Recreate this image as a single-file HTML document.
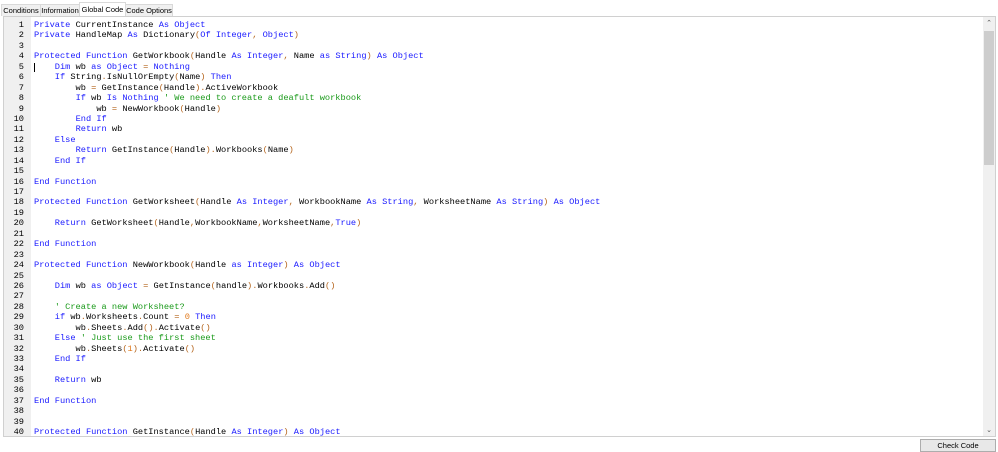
<!DOCTYPE html>
<html><head><style>
body{margin:0;width:998px;height:451px;background:#fff;position:relative;overflow:hidden;font-family:"Liberation Sans",sans-serif}
.tabs{position:absolute;top:2px;left:0;height:14px;font-size:7.5px}
.tab{position:absolute;top:2px;height:11px;line-height:11px;background:#f0f0f0;border:1px solid #d9d9d9;border-bottom:none;text-align:center;color:#000}
.tab.sel{top:0;height:14px;line-height:13px;background:#fff}
.ed{position:absolute;left:3px;top:16px;width:991px;height:419px;border:1px solid #d0d0d0;background:#fff;overflow:hidden}
.gut{position:absolute;left:0;top:0;width:27px;height:100%;background:#f0f0f0}
.code{position:absolute;left:0;top:3px;font-family:"Liberation Mono",monospace;font-size:8.67px;line-height:10.44px;white-space:pre;color:#000}
.ln{display:inline-block;width:20px;text-align:right;margin-right:10px;color:#000}
.k{color:#1a1aff}.p{color:#b5651d}.c{color:#1a9a1a}.n{color:#e0781a}
.sb{position:absolute;right:0;top:0;width:12px;height:100%;background:#f0f0f0}
.th{position:absolute;left:1px;width:10px;top:14px;height:134px;background:#cdcdcd}
.ar{position:absolute;left:0;width:12px;text-align:center;font-size:7px;color:#555}
.btn{position:absolute;left:920px;top:439px;width:74px;height:11px;border:1px solid #adadad;background:#e8e8e8;font-size:7.5px;text-align:center;line-height:11px}
</style></head><body>
<div class="tabs">
<div class="tab" style="left:1px;width:38px">Conditions</div>
<div class="tab" style="left:40px;width:38px">Information</div>
<div class="tab sel" style="left:79px;width:45px">Global Code</div>
<div class="tab" style="left:125px;width:46px">Code Options</div>
</div>
<div class="ed">
<div class="gut"></div>
<div class="code"><span class="ln">1</span><span class="k">Private</span> CurrentInstance <span class="k">As Object</span>
<span class="ln">2</span><span class="k">Private</span> HandleMap <span class="k">As</span> Dictionary<span class="p">(</span><span class="k">Of Integer</span><span class="p">,</span> <span class="k">Object</span><span class="p">)</span>
<span class="ln">3</span>
<span class="ln">4</span><span class="k">Protected Function</span> GetWorkbook<span class="p">(</span>Handle <span class="k">As Integer</span><span class="p">,</span> Name <span class="k">as String</span><span class="p">)</span> <span class="k">As Object</span>
<span class="ln">5</span>    <span class="k">Dim</span> wb <span class="k">as Object</span> <span class="p">=</span> <span class="k">Nothing</span>
<span class="ln">6</span>    <span class="k">If</span> String<span class="p">.</span>IsNullOrEmpty<span class="p">(</span>Name<span class="p">)</span> <span class="k">Then</span>
<span class="ln">7</span>        wb <span class="p">=</span> GetInstance<span class="p">(</span>Handle<span class="p">).</span>ActiveWorkbook
<span class="ln">8</span>        <span class="k">If</span> wb <span class="k">Is Nothing</span> <span class="c">' We need to create a deafult workbook</span>
<span class="ln">9</span>            wb <span class="p">=</span> NewWorkbook<span class="p">(</span>Handle<span class="p">)</span>
<span class="ln">10</span>        <span class="k">End If</span>
<span class="ln">11</span>        <span class="k">Return</span> wb
<span class="ln">12</span>    <span class="k">Else</span>
<span class="ln">13</span>        <span class="k">Return</span> GetInstance<span class="p">(</span>Handle<span class="p">).</span>Workbooks<span class="p">(</span>Name<span class="p">)</span>
<span class="ln">14</span>    <span class="k">End If</span>
<span class="ln">15</span>
<span class="ln">16</span><span class="k">End Function</span>
<span class="ln">17</span>
<span class="ln">18</span><span class="k">Protected Function</span> GetWorksheet<span class="p">(</span>Handle <span class="k">As Integer</span><span class="p">,</span> WorkbookName <span class="k">As String</span><span class="p">,</span> WorksheetName <span class="k">As String</span><span class="p">)</span> <span class="k">As Object</span>
<span class="ln">19</span>
<span class="ln">20</span>    <span class="k">Return</span> GetWorksheet<span class="p">(</span>Handle<span class="p">,</span>WorkbookName<span class="p">,</span>WorksheetName<span class="p">,</span><span class="k">True</span><span class="p">)</span>
<span class="ln">21</span>
<span class="ln">22</span><span class="k">End Function</span>
<span class="ln">23</span>
<span class="ln">24</span><span class="k">Protected Function</span> NewWorkbook<span class="p">(</span>Handle <span class="k">as Integer</span><span class="p">)</span> <span class="k">As Object</span>
<span class="ln">25</span>
<span class="ln">26</span>    <span class="k">Dim</span> wb <span class="k">as Object</span> <span class="p">=</span> GetInstance<span class="p">(</span>handle<span class="p">).</span>Workbooks<span class="p">.</span>Add<span class="p">()</span>
<span class="ln">27</span>
<span class="ln">28</span>    <span class="c">' Create a new Worksheet?</span>
<span class="ln">29</span>    <span class="k">if</span> wb<span class="p">.</span>Worksheets<span class="p">.</span>Count <span class="p">=</span> <span class="n">0</span> <span class="k">Then</span>
<span class="ln">30</span>        wb<span class="p">.</span>Sheets<span class="p">.</span>Add<span class="p">().</span>Activate<span class="p">()</span>
<span class="ln">31</span>    <span class="k">Else</span> <span class="c">' Just use the first sheet</span>
<span class="ln">32</span>        wb<span class="p">.</span>Sheets<span class="p">(</span><span class="n">1</span><span class="p">).</span>Activate<span class="p">()</span>
<span class="ln">33</span>    <span class="k">End If</span>
<span class="ln">34</span>
<span class="ln">35</span>    <span class="k">Return</span> wb
<span class="ln">36</span>
<span class="ln">37</span><span class="k">End Function</span>
<span class="ln">38</span>
<span class="ln">39</span>
<span class="ln">40</span><span class="k">Protected Function</span> GetInstance<span class="p">(</span>Handle <span class="k">As Integer</span><span class="p">)</span> <span class="k">As Object</span></div>
<div style="position:absolute;left:30px;top:46px;width:1px;height:9px;background:#000"></div>
<div class="sb"><div class="ar" style="top:2px">&#8963;</div><div class="th"></div><div class="ar" style="bottom:2px">&#8964;</div></div>
</div>
<div class="btn">Check Code</div>
</body></html>
